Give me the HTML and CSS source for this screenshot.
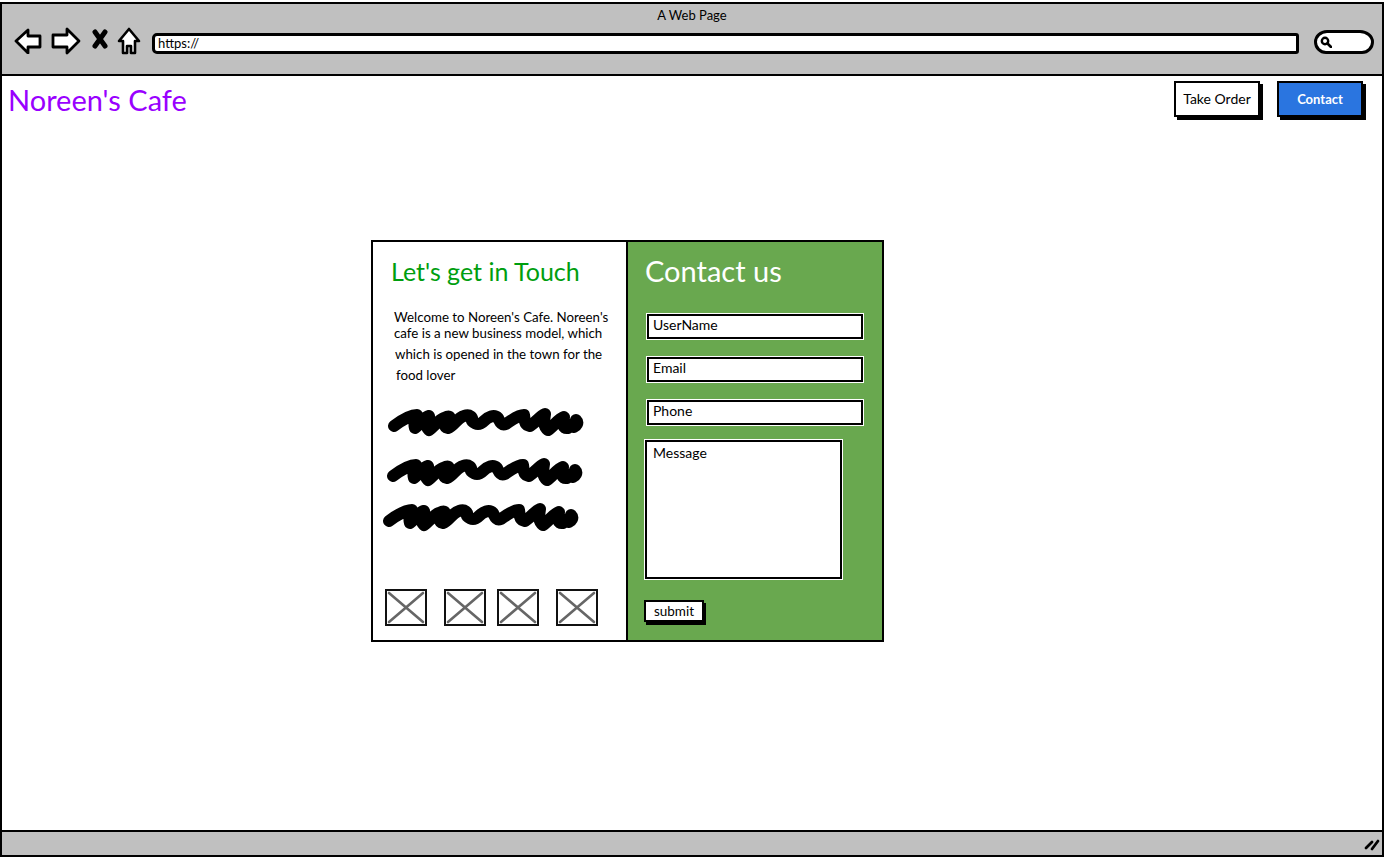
FILE: index.html
```html
<!DOCTYPE html>
<html lang="en">
<head>
<meta charset="utf-8">
<title>A Web Page</title>
<link rel="stylesheet" href="styles.css">
</head>
<body>
<svg class="defs" width="0" height="0" aria-hidden="true">
  <symbol id="scribble" viewBox="0 0 196 30">
    <path d="M6 19C14 13 22 8 29 8C28 12 25 15 27 21C31 18 36 10 41 9C40 14 36 18 41 23C46 20 50 13 56 11C62 8 63 10 60 13C57 17 56 20 60 21C66 19 69 11 76 9C82 7 85 10 84 14C88 18 92 18 96 14C100 10 106 7 110 11C112 15 113 19 118 17C124 13 130 8 136 8C137 14 136 18 142 19C148 15 152 9 157 7C156 14 155 19 160 23C165 20 170 12 176 10C175 16 174 22 180 21C184 18 188 15 188 13C191 16 188 19 186 20" fill="none" stroke="#000" stroke-width="12" stroke-linecap="round" stroke-linejoin="round"/>
  </symbol>
  <symbol id="placeholder-x" viewBox="0 0 38 33">
    <path d="M2 2L36 31M36 2L2 31" fill="none" stroke="#666" stroke-width="2.6" stroke-linecap="round"/>
  </symbol>
</svg>
<div class="window">
  <header class="chrome">
    <div class="chrome-title">A Web Page</div>
    <div class="toolbar">
      <svg class="icon icon-back" viewBox="0 0 28 26"><path d="M2 13L14 2V8H26V19H14V25Z" fill="#fff" stroke="#000" stroke-width="2.8" stroke-linejoin="round"/></svg>
      <svg class="icon icon-forward" viewBox="0 0 30 28"><path d="M28 14L16 2V8H2V20H16V26Z" fill="#fff" stroke="#000" stroke-width="2.8" stroke-linejoin="round"/></svg>
      <svg class="icon icon-stop" viewBox="0 0 16 20"><path d="M3 3L13 17M13 3L3 17" fill="none" stroke="#000" stroke-width="5" stroke-linecap="round"/></svg>
      <svg class="icon icon-home" viewBox="0 0 24 28"><path d="M12 2L22 14H18V26H14V19H10V26H6V14H2Z" fill="#fff" stroke="#000" stroke-width="2.6" stroke-linejoin="round"/></svg>
      <div class="url-bar">https://</div>
      <div class="search-box">
        <svg class="search-icon" viewBox="0 0 12 12"><circle cx="5" cy="5" r="3.2" fill="none" stroke="#000" stroke-width="2.4"/><path d="M7.5 7.5L11 11" stroke="#000" stroke-width="2.6" stroke-linecap="round"/></svg>
      </div>
    </div>
  </header>

  <main class="page">
    <nav class="nav">
      <div class="brand">Noreen's Cafe</div>
      <div class="nav-actions">
        <div class="btn">Take Order</div>
        <div class="btn btn-primary">Contact</div>
      </div>
    </nav>

    <section class="card">
      <div class="card-info">
        <h2 class="info-title">Let's get in Touch</h2>
        <div class="info-text">
          <p class="line line-1">Welcome to Noreen's Cafe. Noreen's</p>
          <p class="line line-2">cafe is a new business model, which</p>
          <p class="line line-3">which is opened in the town for the</p>
          <p class="line line-4">food lover</p>
        </div>
        <div class="scribbles">
          <svg class="scribble scribble-1"><use href="#scribble"/></svg>
          <svg class="scribble scribble-2"><use href="#scribble"/></svg>
          <svg class="scribble scribble-3"><use href="#scribble"/></svg>
        </div>
        <div class="thumbs">
          <div class="thumb"><svg><use href="#placeholder-x"/></svg></div>
          <div class="thumb thumb-wide"><svg><use href="#placeholder-x"/></svg></div>
          <div class="thumb thumb-narrow"><svg><use href="#placeholder-x"/></svg></div>
          <div class="thumb thumb-wide"><svg><use href="#placeholder-x"/></svg></div>
        </div>
      </div>
      <div class="card-form">
        <h2 class="form-title">Contact us</h2>
        <div class="field">UserName</div>
        <div class="field">Email</div>
        <div class="field">Phone</div>
        <div class="message">Message</div>
        <div class="submit">submit</div>
      </div>
    </section>
  </main>

  <footer class="status">
    <svg class="grip" viewBox="0 0 16 14"><path d="M2 11L8 5M8 12L14 4" fill="none" stroke="#000" stroke-width="2.8" stroke-linecap="round"/></svg>
  </footer>
</div>
</body>
</html>
```
FILE: styles.css
```css
* { box-sizing: border-box; }
html, body { margin: 0; padding: 0; }
body {
  width: 1385px;
  height: 859px;
  overflow: hidden;
  background: #fff;
  color: #000;
  font-family: "Lato", "Noto Sans", sans-serif;
}
.defs { display: block; height: 0; }
.window {
  height: 855px;
  margin-top: 2px;
  border: 2px solid #000;
  display: flex;
  flex-direction: column;
  width: 1384px;
}
.chrome {
  height: 72px;
  background: #c0c0c0;
  border-bottom: 2px solid #000;
  flex: none;
}
.chrome-title {
  padding-top: 3px;
  height: 20px;
  text-align: center;
  font-size: 13px;
  line-height: 17px;
}
.toolbar {
  display: flex;
  align-items: center;
  padding-left: 12px;
  height: 35px;
  margin-top: -1px;
}
.icon { display: block; flex: none; }
.icon-back { width: 28px; height: 26px; }
.icon-forward { width: 30px; height: 28px; margin-left: 9px; }
.icon-stop { width: 16px; height: 20px; margin-left: 11px; margin-top: -3px; }
.icon-home { width: 24px; height: 28px; margin-left: 9px; }
.url-bar {
  flex: none;
  width: 1147px;
  height: 21px;
  margin-left: 11px;
  margin-top: 5px;
  padding-left: 3px;
  background: #fff;
  border: 3px solid #000;
  border-radius: 5px 3px 3px 5px;
  font-size: 13px;
  line-height: 14px;
}
.search-box {
  flex: none;
  width: 60px;
  height: 24px;
  margin-left: 15px;
  margin-top: 3px;
  padding: 3px 0 0 3px;
  background: #fff;
  border: 3px solid #000;
  border-radius: 13px 14px 12px 12px / 12px;
}
.search-icon { display: block; width: 12px; height: 12px; }

.page { flex: 1; min-height: 0; }
.nav {
  display: flex;
  justify-content: space-between;
  padding: 5px 19px 0 6px;
  height: 164px;
}
.brand {
  color: #9900ff;
  font-size: 29px;
  line-height: 38px;
}
.nav-actions { display: flex; gap: 17px; height: 38px; }
.btn {
  width: 86px;
  height: 36px;
  background: #fff;
  border: 2px solid #000;
  box-shadow: 3px 3px 0 #000;
  text-align: center;
  font-size: 14px;
  line-height: 32px;
}
.btn-primary {
  background: #2a75e0;
  color: #fff;
  font-size: 13px;
  font-weight: 700;
}

.card {
  display: flex;
  width: 513px;
  height: 402px;
  margin-left: 369px;
}
.card-info {
  width: 257px;
  border: 2px solid #000;
  background: #fff;
  padding: 0 0 0 12px;
}
.info-title {
  margin: 13px 0 0 6px;
  font-size: 25px;
  font-weight: 400;
  line-height: 32px;
  color: #009e0f;
}
.info-text { margin-top: 22px; }
.line { margin: 0; font-size: 13.3px; line-height: 16px; white-space: nowrap; }
.line-1 { padding-left: 9px; }
.line-2 { padding-left: 9px; }
.line-3 { padding-left: 10px; margin-top: 5px; }
.line-4 { padding-left: 11px; margin-top: 5px; }
.scribbles { margin-top: 24px; height: 154px; }
.scribble { display: block; width: 196px; height: 30px; }
.scribble-1 { margin-left: 3px; }
.scribble-2 { margin-left: 2px; margin-top: 20px; }
.scribble-3 { margin-left: -2px; margin-top: 15px; }
.thumbs { display: flex; margin-top: 28px; }
.thumb {
  width: 42px;
  height: 37px;
  border: 2px solid #111;
  flex: none;
}
.thumb svg { display: block; width: 38px; height: 33px; }
.thumb-wide { margin-left: 17px; }
.thumb-narrow { margin-left: 11px; }

.card-form {
  width: 256px;
  background: #69a84f;
  border: 2px solid #000;
  border-left: 0;
  padding: 0 0 0 16px;
}
.form-title {
  margin: 12px 0 26px 1px;
  font-size: 29px;
  font-weight: 400;
  line-height: 34px;
  color: #fff;
}
.field {
  width: 216px;
  height: 25px;
  margin: 0 0 18px 3px;
  padding-left: 4px;
  background: #fff;
  border: 2px solid #000;
  box-shadow: 0 0 0 1px #fff;
  font-size: 14px;
  line-height: 18px;
}
.message {
  width: 197px;
  height: 139px;
  margin: -3px 0 0 1px;
  padding: 2px 0 0 6px;
  background: #fff;
  border: 2px solid #000;
  box-shadow: 0 0 0 1px #fff;
  font-size: 14px;
  line-height: 17px;
}
.submit {
  width: 60px;
  height: 22px;
  margin-top: 21px;
  background: #fff;
  border: 2px solid #000;
  box-shadow: 2px 3px 0 #000;
  text-align: center;
  font-size: 13.5px;
  line-height: 19px;
}

.status {
  flex: none;
  height: 25px;
  background: #c0c0c0;
  border-top: 2px solid #000;
  display: flex;
  justify-content: flex-end;
  align-items: center;
  padding-right: 2px;
}
.grip { display: block; width: 16px; height: 14px; }
```
